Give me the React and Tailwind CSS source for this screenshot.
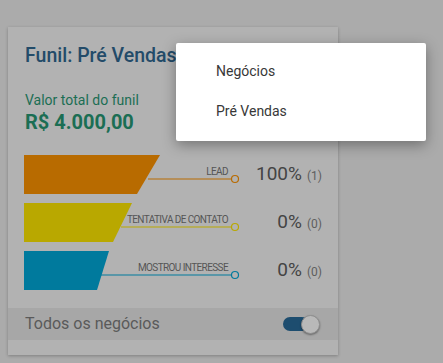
export default function App() {
  const rows = [
    { label: "LEAD", color: "#b86b00", pts: "0,0 136,0 113,39 0,39", lx: 124, pct: "100%", n: "(1)" },
    { label: "TENTATIVA DE CONTATO", color: "#b9a800", pts: "0,0 108,0 89,39 0,39", lx: 97, pct: "0%", n: "(0)" },
    { label: "MOSTROU INTERESSE", color: "#007a9d", pts: "0,0 85,0 73,39 0,39", lx: 76, pct: "0%", n: "(0)" },
  ];
  return (
    <div className="relative w-[443px] h-[363px] bg-[#ababab] overflow-hidden" style={{ fontFamily: "Roboto, 'Liberation Sans', sans-serif" }}>
      <div className="pt-[27px] pl-[8px]">
        <div className="w-[330px] h-[328px] bg-[#b2b2b2] shadow-[0_1px_3px_rgba(0,0,0,0.25)] pt-[15px] flex flex-col">
          <div className="px-[17px]">
            <div className="text-[19.5px] leading-[28px] font-medium text-[#234b69] whitespace-nowrap">Funil: Pré Vendas</div>
            <div className="mt-[20px] text-[14px] leading-[20px] text-[#1b6e54]">Valor total do funil</div>
            <div className="text-[20px] leading-[24px] font-bold text-[#1b6e54]">R$ 4.000,00</div>
          </div>
          <div className="mt-[21px] pl-[16px] pr-[16px] flex flex-col gap-[9px]">
            {rows.map((r) => (
              <div key={r.label} className="flex items-center h-[39px]">
                <div className="relative w-[216px] h-[39px] shrink-0">
                  <svg width="216" height="39" viewBox="0 0 216 39" className="block">
                    <polygon points={r.pts} fill={r.color} />
                    <line x1={r.lx} y1="24" x2="207.5" y2="24" stroke={r.color} strokeWidth="1" />
                    <circle cx="211" cy="24" r="3.5" fill="none" stroke={r.color} strokeWidth="1.2" />
                  </svg>
                  <span className="absolute right-[12px] top-[12px] text-[10px] leading-none tracking-[-0.6px] text-[#555555] whitespace-nowrap">{r.label}</span>
                </div>
                <div className="flex-1 flex items-baseline justify-end gap-[5px]">
                  <span className="text-[19px] text-[#444444]">{r.pct}</span>
                  <span className="text-[12px] text-[#5e5e5e]">{r.n}</span>
                </div>
              </div>
            ))}
          </div>
          <div className="mt-[18px] h-[32px] bg-[#a7a7a7] flex items-center justify-between pl-[17px] pr-[19px]">
            <span className="text-[16px] text-[#5a5a5a]">Todos os negócios</span>
            <div className="relative w-[36px] h-[20px] flex items-center">
              <div className="w-[26px] h-[14px] rounded-full bg-[#1d4d6f]" />
              <div className="absolute left-[18px] top-[1px] w-[19px] h-[19px] rounded-full bg-[#b9b9b9] border border-[#8f8f8f] shadow-[0_1px_2px_rgba(0,0,0,0.4)]" />
            </div>
          </div>
        </div>
      </div>
      <div className="absolute left-[176px] top-[43px] w-[250px] h-[98px] bg-white rounded-[2px] shadow-[0_4px_14px_rgba(0,0,0,0.35)] py-[8px]">
        <div className="h-[40px] leading-[40px] pl-[40px] text-[14px] text-[#383838]">Negócios</div>
        <div className="h-[40px] leading-[40px] pl-[40px] text-[14px] text-[#383838]">Pré Vendas</div>
      </div>
    </div>
  );
}
